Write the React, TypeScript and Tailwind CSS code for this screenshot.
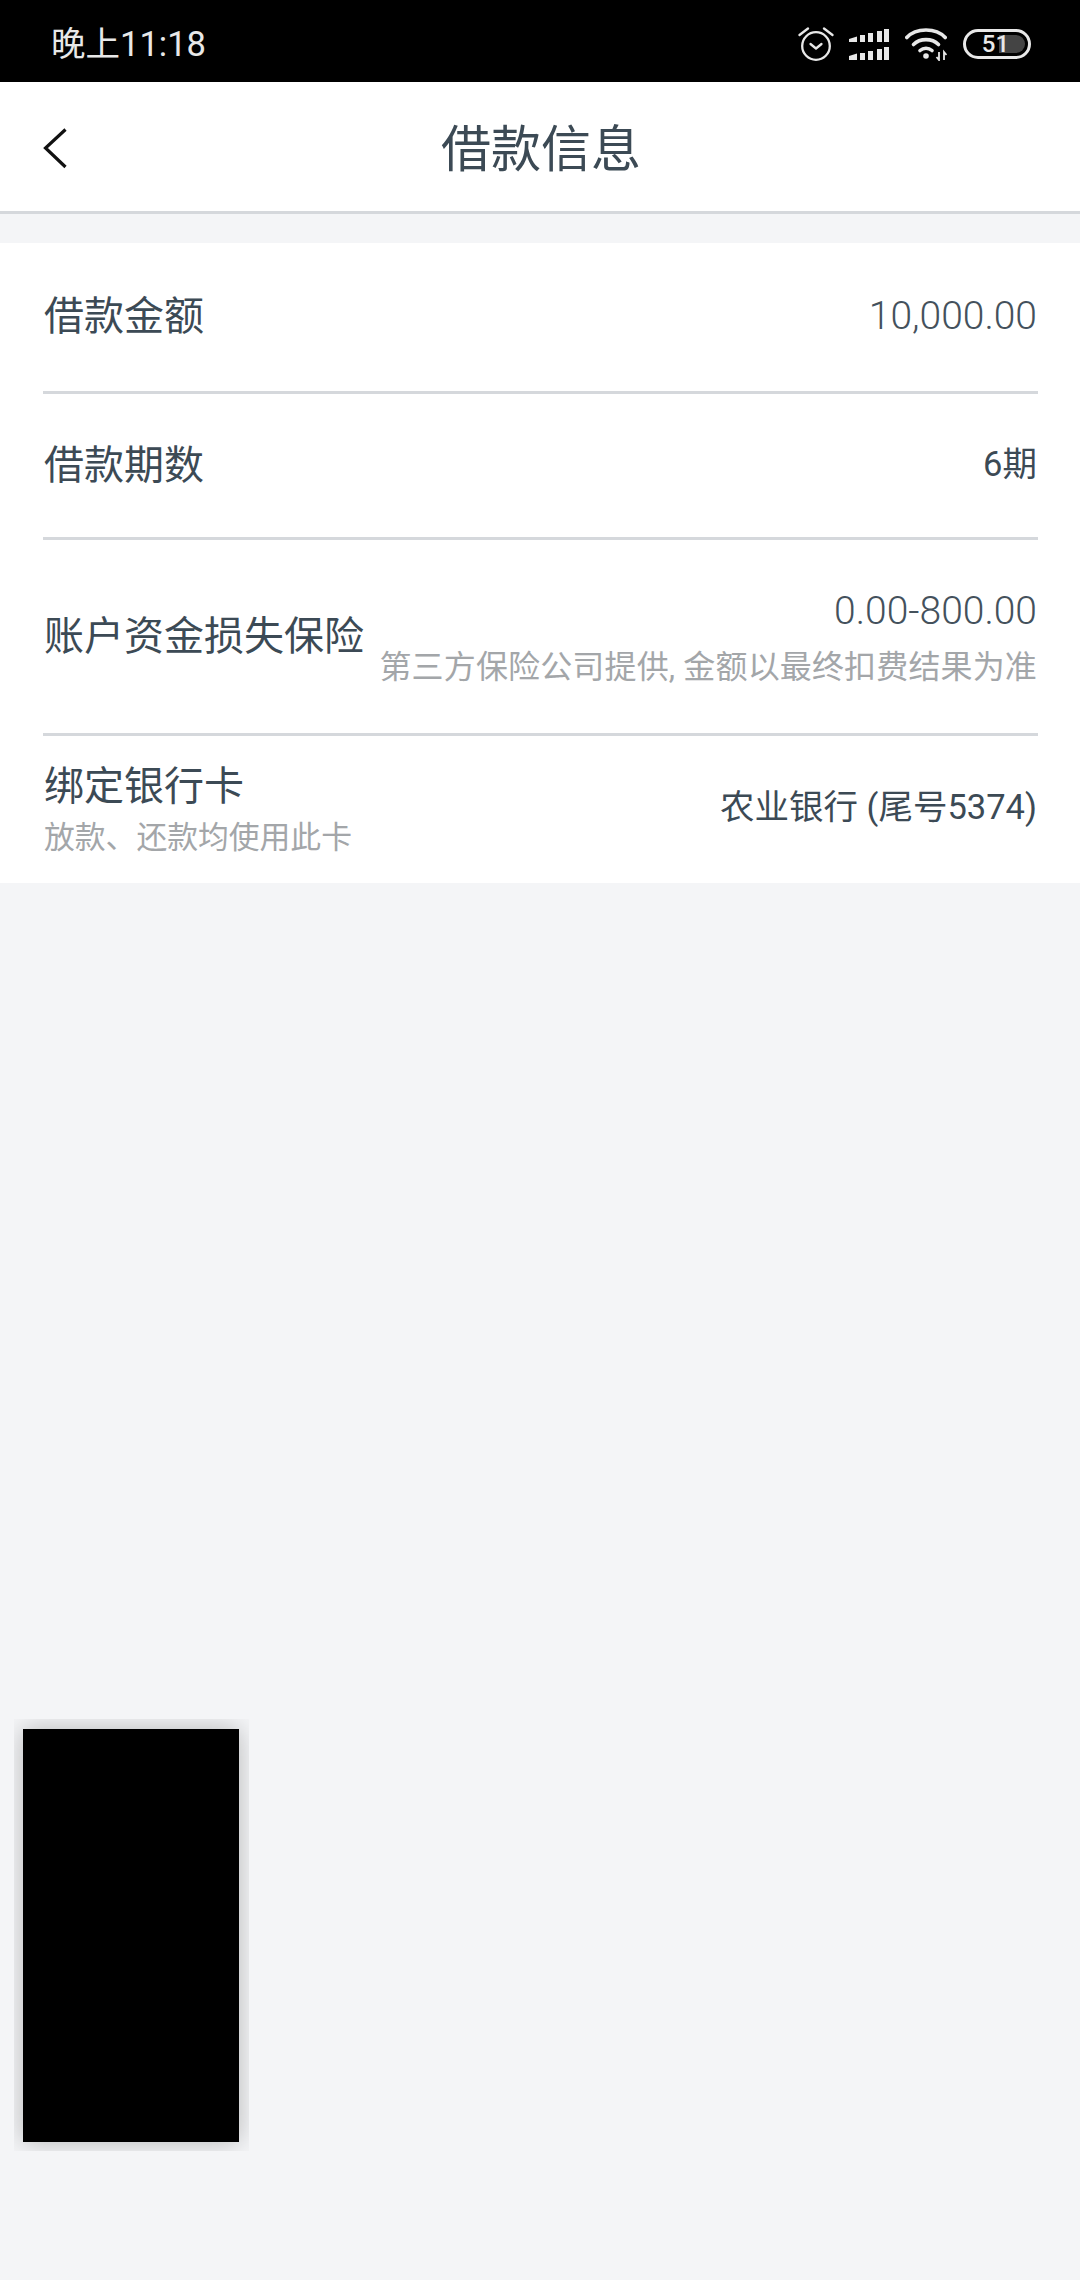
import React from 'react';

const cjk = "font-['Roboto','Noto_Sans_CJK_SC',sans-serif]";

const AlarmIcon = () => (
  <svg width="36" height="34" viewBox="0 0 36 34" fill="none" stroke="#e8e8e8" strokeWidth="2.3" strokeLinecap="round" strokeLinejoin="round">
    <circle cx="18" cy="19" r="13.8" />
    <path d="M12.500 17l5.500 4.500 5.500-4.500" />
    <path d="M1.500 8L10 1.500M34.500 8L26 1.500" />
  </svg>
);

const SignalIcon = () => (
  <svg width="40" height="31" viewBox="0 0 40 31" fill="#e8e8e8">
    <path d="M0 10l8-2.500V13H0zM11 6h5v7h-5zM19 4h5v9h-5zM28 2h5v11h-5zM35 0h5v13h-5z" />
    <path d="M0 27l8-2.500V31H0zM11 24h5v7h-5zM19 22h5v9h-5zM28 20h5v11h-5zM35 18h5v13h-5z" />
  </svg>
);

const WifiIcon = () => (
  <svg width="42" height="33" viewBox="0 0 42 33" fill="none" stroke="#e8e8e8" strokeWidth="3.6" strokeLinecap="round">
    <path d="M1.800 9.500C11 -0.500 31 -0.500 40.200 9.500" />
    <path d="M8.500 16.500C15 10 27 10 33.500 16.500" />
    <path d="M15 22.500c3.500-3 8.500-3 12 0" />
    <circle cx="21" cy="28" r="2.800" fill="#e8e8e8" stroke="none" />
    <path d="M34 24v8l-2.500-3M39 32v-8l2.500 3" strokeWidth="1.800" strokeLinecap="butt" />
  </svg>
);

const Battery = () => (
  <div className="relative flex h-[30px] w-[68px] items-center overflow-hidden rounded-full border-[3px] border-[#e8e8e8] bg-black">
    <div className="absolute top-[3px] bottom-[3px] left-[3px] w-[56px] overflow-hidden rounded-full">
      <div className="absolute inset-y-0 right-0 w-[26px] bg-[#444444]"></div>
    </div>
    <span className="relative w-full pr-[3px] text-center font-['Roboto',sans-serif] text-[24px] leading-none font-medium text-[#e8e8e8]">51</span>
  </div>
);

const StatusBar = () => (
  <div className="flex h-[82px] items-center justify-between bg-black pt-[6px] pr-[49px] pl-[51px]">
    <span className={`${cjk} text-[34.5px] leading-none text-[#e8e8e8]`}>晚上11:18</span>
    <div className="flex items-center">
      <AlarmIcon />
      <div className="ml-[15px]"><SignalIcon /></div>
      <div className="ml-[16px]"><WifiIcon /></div>
      <div className="ml-[16px]"><Battery /></div>
    </div>
  </div>
);

const Header = () => (
  <div className="relative flex h-[132px] items-center justify-center border-b-[3px] border-[#d5d8dc] bg-white pt-[6px]">
    <svg className="absolute top-[46px] left-[43px]" width="26" height="42" viewBox="0 0 26 42" fill="none" stroke="#111111" strokeWidth="3.2">
      <path d="M22.500 1.500L2.500 20l20 19" />
    </svg>
    <span className={`${cjk} pl-[2px] text-[50px] leading-none text-[#3c4a55]`}>借款信息</span>
  </div>
);

const Divider = () => <div className="mr-[42px] ml-[43px] h-[3px] bg-[#d5d8dc]"></div>;

export default function App() {
  return (
    <div className={`${cjk} flex min-h-[2280px] flex-col bg-[#f4f5f7]`}>
      <StatusBar />
      <Header />

      <div className="mt-[29px] bg-white">
        <div className="flex h-[148px] items-center justify-between pr-[43px] pl-[44px]">
          <span className="text-[40px] text-[#3c4a55]">借款金额</span>
          <span className="pb-[2px] text-[39px] font-light text-[#44515c]">10,000.00</span>
        </div>
        <Divider />
        <div className="flex h-[143px] items-center justify-between pr-[43px] pl-[44px]">
          <span className="text-[40px] text-[#3c4a55]">借款期数</span>
          <span className="pb-[1px] text-[34.5px] text-[#3c4a55]">6期</span>
        </div>
        <Divider />
        <div className="flex h-[193px] items-center justify-between pr-[43px] pl-[44px]">
          <span className="text-[40px] text-[#3c4a55]">账户资金损失保险</span>
          <div className="flex flex-col items-end pt-[3px]">
            <span className="text-[39px] leading-[52px] font-light text-[#44515c]">0.00-800.00</span>
            <span className="mt-[6px] text-[32px] leading-[48px] tracking-[0.15px] text-[#a3a6a9]">第三方保险公司提供, 金额以最终扣费结果为准</span>
          </div>
        </div>
        <Divider />
        <div className="flex h-[147px] items-center justify-between pr-[43px] pl-[44px]">
          <div className="flex flex-col pt-[6px]">
            <span className="text-[40px] leading-[50px] text-[#3c4a55]">绑定银行卡</span>
            <span className="text-[30.8px] leading-[52px] text-[#a3a6a9]">放款、还款均使用此卡</span>
          </div>
          <span className="pb-[3px] text-[34.5px] text-[#3c4a55]">农业银行 (尾号5374)</span>
        </div>
      </div>

      {/* floating window, the content is blacked out in the picture */}
      <div className="absolute top-[1719px] left-[14px] h-[432px] w-[235px] overflow-hidden pt-[10px] pl-[9px]">
        <div className="h-[413px] w-[216px] bg-black shadow-[0_0_24px_rgba(0,0,0,0.26)]"></div>
      </div>
    </div>
  );
}
